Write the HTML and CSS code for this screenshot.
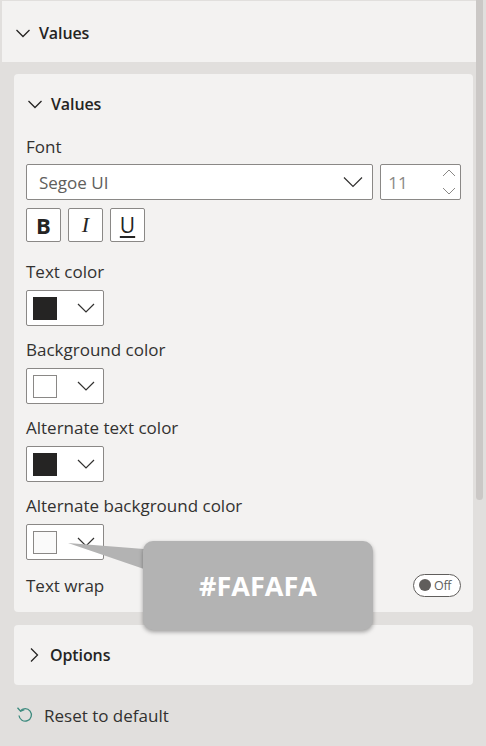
FILE: index.html
```html
<!DOCTYPE html>
<html>
<head>
<meta charset="utf-8">
<link rel="stylesheet" href="styles.css">
</head>
<body>
<div class="panel">
  <div class="content">
    <div class="top-header">
      <svg class="chev" width="16" height="16" viewBox="0 0 16 16"><path d="M1.5 5 L8 11.5 L14.5 5" fill="none" stroke="#252423" stroke-width="1.3"/></svg>
      <span class="title">Values</span>
    </div>
    <div class="area">
      <div class="card card-values">
        <div class="card-header">
          <svg class="chev" width="16" height="16" viewBox="0 0 16 16"><path d="M1.5 5 L8 11.5 L14.5 5" fill="none" stroke="#252423" stroke-width="1.3"/></svg>
          <span class="title">Values</span>
        </div>
        <div class="label label-first">Font</div>
        <div class="font-row">
          <div class="dropdown">
            <span class="dd-text">Segoe UI</span>
            <svg width="20" height="12" viewBox="0 0 20 12"><path d="M1 1.5 L10 10.5 L19 1.5" fill="none" stroke="#323130" stroke-width="1.2"/></svg>
          </div>
          <div class="number">
            <span class="num-text">11</span>
            <svg class="spin" width="14" height="30" viewBox="0 0 14 30"><path d="M1 9 L7 3 L13 9" fill="none" stroke="#8a8886" stroke-width="1"/><path d="M1 21 L7 27 L13 21" fill="none" stroke="#8a8886" stroke-width="1"/></svg>
          </div>
        </div>
        <div class="style-row">
          <div class="sbtn sb-bold">B</div>
          <div class="sbtn sb-italic">I</div>
          <div class="sbtn sb-under">U</div>
        </div>
        <div class="label label-gap1">Text color</div>
        <div class="swatch-btn"><span class="swatch dark"></span><svg width="18" height="10" viewBox="0 0 18 10"><path d="M1 1 L9 9 L17 1" fill="none" stroke="#323130" stroke-width="1.2"/></svg></div>
        <div class="label">Background color</div>
        <div class="swatch-btn"><span class="swatch white"></span><svg width="18" height="10" viewBox="0 0 18 10"><path d="M1 1 L9 9 L17 1" fill="none" stroke="#323130" stroke-width="1.2"/></svg></div>
        <div class="label">Alternate text color</div>
        <div class="swatch-btn"><span class="swatch dark"></span><svg width="18" height="10" viewBox="0 0 18 10"><path d="M1 1 L9 9 L17 1" fill="none" stroke="#323130" stroke-width="1.2"/></svg></div>
        <div class="label">Alternate background color</div>
        <div class="swatch-btn"><span class="swatch offwhite"></span><svg width="18" height="10" viewBox="0 0 18 10"><path d="M1 1 L9 9 L17 1" fill="none" stroke="#323130" stroke-width="1.2"/></svg></div>
        <div class="wrap-row">
          <span class="wrap-label">Text wrap</span>
          <div class="toggle"><span class="knob"></span><span class="off">Off</span></div>
        </div>
      </div>
      <div class="card card-options">
        <svg class="chev-right" width="16" height="16" viewBox="0 0 16 16"><path d="M5 1.5 L11.5 8 L5 14.5" fill="none" stroke="#252423" stroke-width="1.3"/></svg>
        <span class="title">Options</span>
      </div>
      <div class="reset">
        <svg width="18" height="18" viewBox="0 0 18 18"><path d="M4.2 5.2 A6.2 6.2 0 1 1 3 9.5" fill="none" stroke="#3c8a7e" stroke-width="1.3"/><path d="M1.5 1.8 L4.6 5.3 L8.3 3.6" fill="none" stroke="#3c8a7e" stroke-width="1.3"/></svg>
        <span class="reset-text">Reset to default</span>
      </div>
    </div>
  </div>
  <div class="scrollbar"><div class="thumb"></div></div>
  <div class="callout">
    <svg class="tail" width="80" height="30" viewBox="0 0 80 30"><polygon points="0,2 76,8 76,28" fill="#b3b3b3"/></svg>
    <div class="callout-box">#FAFAFA</div>
  </div>
</div>
</body>
</html>
```
FILE: styles.css
```css
* { box-sizing: border-box; }
html, body { margin: 0; padding: 0; }
body {
  width: 486px;
  height: 746px;
  overflow: hidden;
  background: #e1dfdd;
  font-family: "Open Sans", "Noto Sans", sans-serif;
  color: #323130;
}
.panel {
  position: relative;
  display: flex;
  width: 486px;
  height: 746px;
}
.content {
  width: 476px;
  display: flex;
  flex-direction: column;
}
.top-header {
  height: 62px;
  background: #f3f2f1;
  border-top: 1px solid #e1dfdd;
  border-left: 2px solid #e1dfdd;
  display: flex;
  align-items: center;
  padding-left: 13px;
  padding-top: 2px;
}
.chev { margin-right: 8px; flex: none; }
.title {
  font-size: 16px;
  font-weight: 600;
  color: #252423;
  letter-spacing: -0.1px;
}
.area {
  padding: 12px 3px 0 14px;
  display: flex;
  flex-direction: column;
}
.card {
  background: #f3f2f1;
  border-radius: 4px;
}
.card-values {
  height: 538px;
  padding: 0 12px;
  display: flex;
  flex-direction: column;
}
.card-header {
  height: 60px;
  display: flex;
  align-items: center;
  padding-left: 1px;
}
.label {
  font-size: 17px;
  height: 20px;
  line-height: 20px;
  margin-top: 14px;
  margin-bottom: 8px;
  color: #323130;
}
.label-first { margin-top: 3px; margin-bottom: 7px; }
.label-gap1 { margin-top: 20px; }
.font-row {
  display: flex;
  gap: 7px;
  height: 36px;
}
.dropdown {
  width: 348px;
  background: #fff;
  border: 1px solid #8a8886;
  border-radius: 2px;
  display: flex;
  align-items: center;
  justify-content: space-between;
  padding: 0 9px 0 12px;
}
.dd-text { font-size: 17px; color: #605e5c; }
.number {
  width: 81px;
  background: #fff;
  border: 1px solid #8a8886;
  border-radius: 2px;
  display: flex;
  align-items: center;
  justify-content: space-between;
  padding: 0 4px 0 7px;
}
.num-text { font-size: 17px; color: #8a8886; }
.style-row {
  display: flex;
  gap: 7px;
  margin-top: 8px;
}
.sbtn {
  width: 35px;
  height: 34px;
  background: #fff;
  border: 1px solid #8a8886;
  border-radius: 2px;
  display: flex;
  align-items: center;
  justify-content: center;
  color: #252423;
}
.sb-bold { font-weight: 700; font-size: 22px; font-family: "Open Sans", sans-serif; }
.sb-italic { font-style: italic; font-size: 22px; font-family: "Liberation Serif", serif; font-weight: 400; }
.sb-under { font-size: 21px; text-decoration: underline; text-underline-offset: 3px; text-decoration-thickness: 1.5px; }
.swatch-btn {
  width: 78px;
  height: 36px;
  background: #fff;
  border: 1px solid #8a8886;
  border-radius: 2px;
  display: flex;
  align-items: center;
  padding-left: 6px;
  gap: 20px;
}
.swatch {
  width: 24px;
  height: 23px;
  border: 1px solid #8a8886;
}
.swatch.dark { background: #252423; border-color: #252423; }
.swatch.white { background: #fff; }
.swatch.offwhite { background: #fafafa; }
.wrap-row {
  margin-top: 14px;
  height: 22px;
  display: flex;
  align-items: center;
  justify-content: space-between;
}
.wrap-label { font-size: 17px; }
.toggle {
  width: 48px;
  height: 23px;
  border: 1px solid #605e5c;
  border-radius: 12px;
  background: #fff;
  display: flex;
  align-items: center;
  padding-left: 5px;
  gap: 3px;
}
.knob {
  width: 12px;
  height: 12px;
  border-radius: 50%;
  background: #605e5c;
}
.off { font-size: 12.5px; color: #605e5c; letter-spacing: -0.3px; }
.card-options {
  margin-top: 13px;
  height: 60px;
  display: flex;
  align-items: center;
  padding-left: 12px;
}
.chev-right { margin-right: 8px; }
.reset {
  margin-top: 19px;
  display: flex;
  align-items: center;
  padding-left: 2px;
  gap: 10px;
  height: 22px;
}
.reset-text { font-size: 17px; color: #323130; }
.scrollbar {
  width: 10px;
  background: #e1dfdd;
}
.thumb {
  width: 7px;
  height: 500px;
  background: #cbc8c6;
  border-radius: 0 0 4px 4px;
}
.callout {
  position: absolute;
  left: 68px;
  top: 541px;
}
.tail {
  position: absolute;
  left: 0;
  top: 0;
}
.callout-box {
  position: absolute;
  left: 75px;
  top: 0;
  width: 230px;
  height: 89px;
  background: #b3b3b3;
  border-radius: 10px;
  box-shadow: 0 2px 4px rgba(0,0,0,0.35);
  color: #fff;
  font-family: "Open Sans", sans-serif;
  font-weight: 700;
  font-size: 27px;
  display: flex;
  align-items: center;
  justify-content: center;
}
```
